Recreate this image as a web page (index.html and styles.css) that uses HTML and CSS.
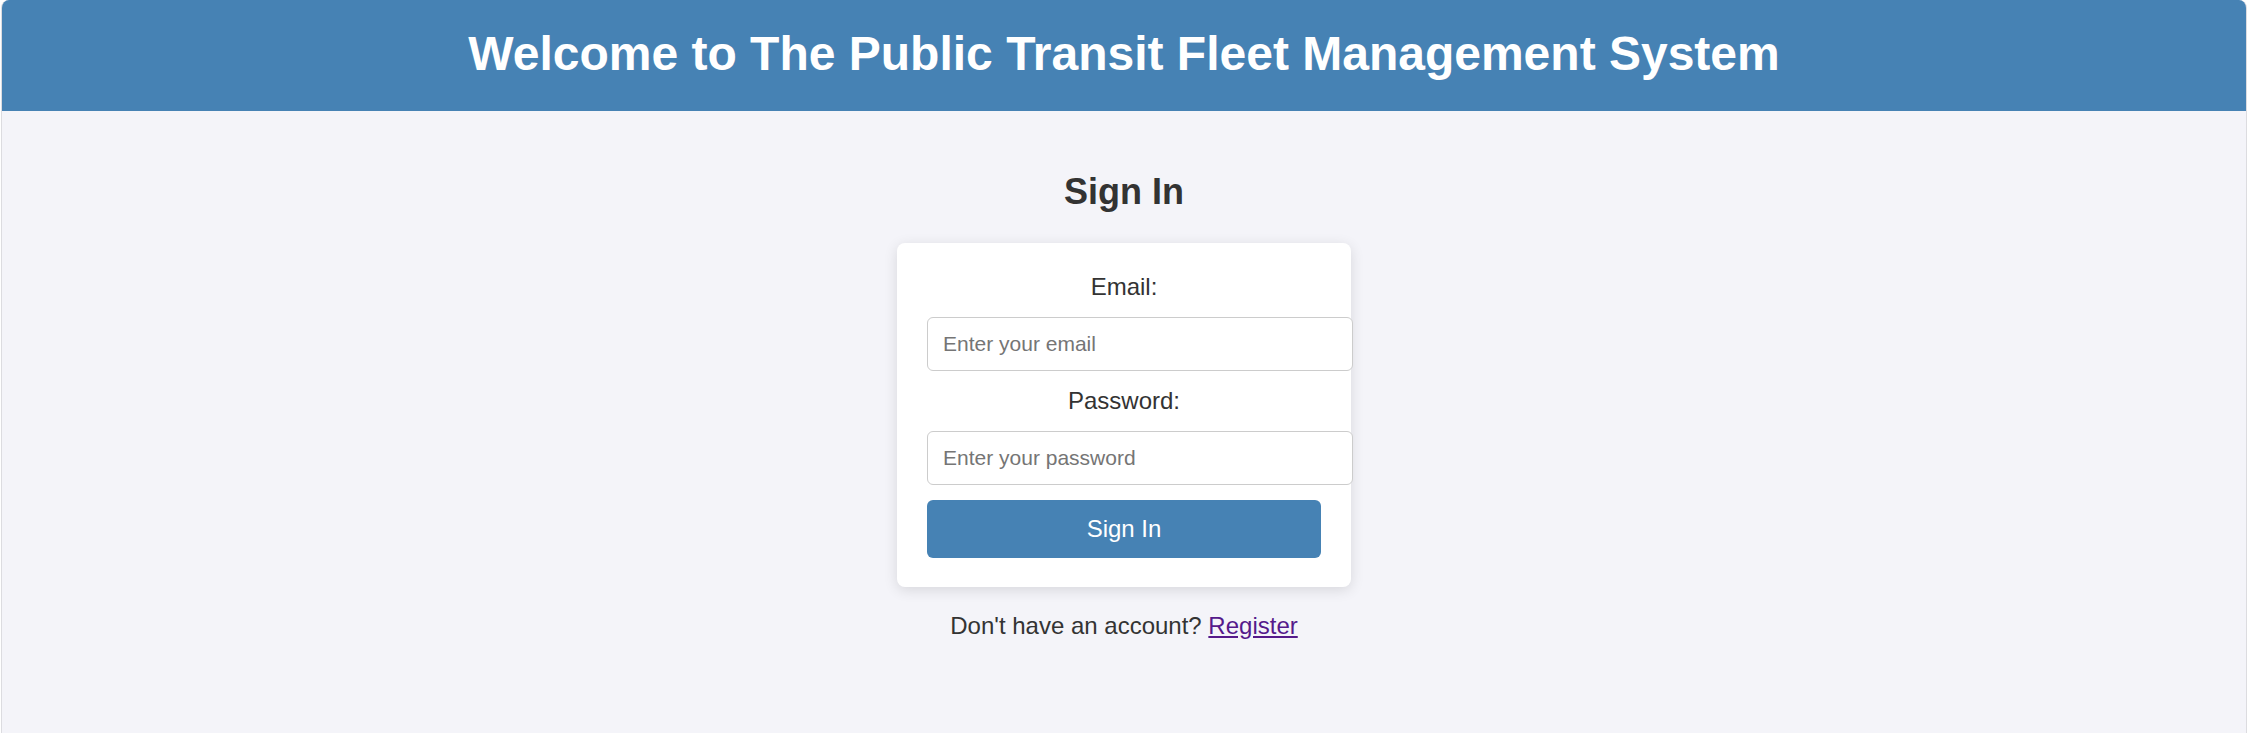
FILE: index.html
```html
<!DOCTYPE html>
<html lang="en">
<head>
<meta charset="utf-8">
<title>Sign In</title>
<link rel="stylesheet" href="styles.css">
</head>
<body>
<div class="frame">
  <header class="top">
    <h1 class="title">Welcome to The Public Transit Fleet Management System</h1>
  </header>
  <main class="main">
    <h2 class="heading">Sign In</h2>
    <form class="card">
      <label class="label" for="email">Email:</label>
      <input class="field" type="email" id="email" placeholder="Enter your email">
      <label class="label" for="password">Password:</label>
      <input class="field" type="password" id="password" placeholder="Enter your password">
      <button class="btn" type="button">Sign In</button>
    </form>
    <p class="note">Don't have an account? <a class="link" href="#register">Register</a></p>
  </main>
</div>
</body>
</html>
```

FILE: styles.css
```css
html, body {
  margin: 0;
  padding: 0;
  background: #ffffff;
}

body {
  font-family: "Liberation Sans", Arial, sans-serif;
  color: #333333;
}

.frame {
  margin-left: 1px;
  width: 2246px;
  height: 733px;
  box-sizing: border-box;
  border-left: 1px solid #dcdce0;
  border-right: 1px solid #dcdce0;
  border-radius: 8px 8px 0 0;
  overflow: hidden;
  background: #f4f4f9;
}

.top {
  background: #4682b4;
  padding: 26px 0 30px;
  text-align: center;
}

.title {
  margin: 0;
  font-size: 48px;
  font-weight: bold;
  color: #ffffff;
}

.main {
  padding: 30px;
  display: flex;
  flex-direction: column;
  align-items: center;
}

.heading {
  margin: 30px 0 30px;
  font-size: 36px;
  font-weight: bold;
  color: #333333;
}

.card {
  width: 454px;
  box-sizing: border-box;
  padding: 30px 30px 29.5px;
  background: #ffffff;
  border-radius: 8px;
  box-shadow: 0 3px 14px rgba(0, 0, 0, 0.12);
  display: flex;
  flex-direction: column;
  text-align: center;
}

.label {
  display: block;
  font-size: 24px;
  color: #333333;
  margin-bottom: 16px;
}

.field {
  width: 100%;
  box-sizing: content-box;
  padding: 14px 15px;
  margin: 0 0 15.5px;
  border: 1px solid #cccccc;
  border-radius: 6px;
  font-family: "Liberation Sans", Arial, sans-serif;
  font-size: 21px;
  line-height: 24px;
  color: #333333;
  background: #ffffff;
}

.field::placeholder {
  color: #757575;
}

.btn {
  width: 100%;
  padding: 15px;
  border: none;
  border-radius: 6px;
  background: #4682b4;
  color: #ffffff;
  font-family: "Liberation Sans", Arial, sans-serif;
  font-size: 24px;
  line-height: 27.6px;
  cursor: pointer;
}

.note {
  margin: 24.5px 0 0;
  font-size: 24px;
  color: #333333;
}

.link {
  color: #551a8b;
  text-decoration: underline;
}
```
